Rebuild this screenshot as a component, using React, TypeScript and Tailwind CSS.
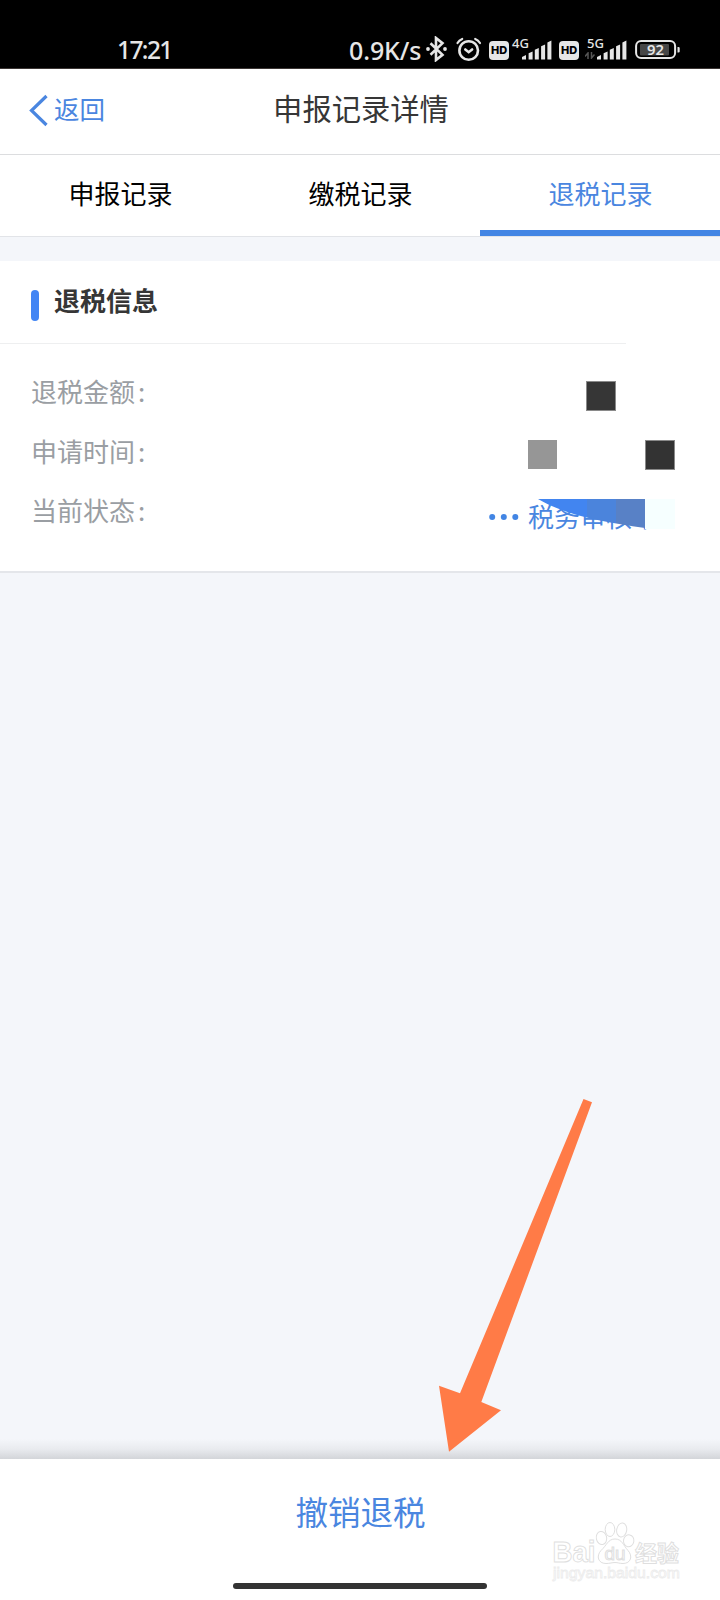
const tabs = [
    { label: '申报记录', active: false },
    { label: '缴税记录', active: false },
    { label: '退税记录', active: true },
];

function SignalBars() {
    return (
        <svg className="block" width="30" height="20" viewBox="0 0 30 20" fill="#e6e6e6">
            <path d="M0 19.5v-2.6l4-1.9v4.5zM6.6 19.5v-6.2l4-1.8v8zM12.8 19.5V9.8l4-1.8v11.5zM19.1 19.5V6.2l4-1.8v15.1zM25.4 19.5V2.4l4-1.8v18.9z" />
        </svg>
    );
}

function HdBadge() {
    return (
        <div className="flex h-[19px] w-[20px] items-center justify-center rounded-[4px] bg-[#e6e6e6] font-['Inter'] text-[11px] leading-none font-extrabold text-black">
            HD
        </div>
    );
}

function StatusBar() {
    return (
        <div className="flex h-[69px] items-start border-b border-[#3c3634] bg-black pt-[36px] font-['Noto_Sans'] font-medium text-[#e6e6e6]">
            <span className="ml-[117px] w-[232px] text-[24.5px] leading-[28px] tracking-[-1.6px]">17:21</span>
            <span className="w-[76px] text-[25px] leading-[28px] tracking-[-0.1px]">0.9K/s</span>

            {/* Bluetooth */}
            <svg className="block" width="24" height="26" viewBox="0 0 24 26" fill="none" stroke="#e6e6e6" strokeWidth="2.6">
                <path d="M5.5 7.2l12 11.6-6.5 5.2V2l6.5 5.2-12 11.6" />
                <circle cx="20" cy="13" r="1.9" fill="#e6e6e6" stroke="none" />
                <circle cx="3" cy="13" r="1.9" fill="#e6e6e6" stroke="none" />
            </svg>

            {/* Alarm */}
            <svg className="ml-[6px] block" width="28" height="26" viewBox="0 0 28 26" fill="none" stroke="#e6e6e6" strokeWidth="2.6" strokeLinecap="round">
                <circle cx="13.7" cy="14.5" r="9.3" />
                <path d="M10.3 13.5l3.4 2.7 3.4-2.7" />
                <path d="M2.5 7Q4.2 4.1 7.2 2.9M25 7Q23.2 4.1 20.2 2.9" strokeWidth="2.2" />
            </svg>

            <div className="mt-[4.5px] ml-[6px]">
                <HdBadge />
            </div>
            <div className="relative mt-[4px] ml-[13px]">
                <SignalBars />
                <span className="absolute -top-[5px] -left-[10px] text-[13px] leading-[16px]">4G</span>
            </div>
            <div className="mt-[4.5px] ml-[7px]">
                <HdBadge />
            </div>
            <div className="relative mt-[4px] ml-[18px]">
                <SignalBars />
                <span className="absolute -top-[5px] -left-[10px] text-[13px] leading-[16px]">5G</span>
                <svg className="absolute top-[12px] -left-[12px]" width="10" height="7" viewBox="0 0 10 7" fill="none" stroke="#555" strokeWidth="1.5">
                    <path d="M0 4.5L3 1v6M9.5 2.5L6.5 6V0" />
                </svg>
            </div>

            {/* Battery */}
            <svg className="mt-[4px] ml-[8px] block" width="46" height="20" viewBox="0 0 46 20">
                <rect x="1.1" y="1.1" width="39" height="17" rx="5" fill="none" stroke="#e6e6e6" strokeWidth="2" />
                <rect x="5" y="4" width="29" height="11.5" rx="1" fill="#474747" />
                <path d="M42.5 7h1q1.2 0 1.2 1v3.5q0 1-1.2 1h-1z" fill="#e6e6e6" />
                <text x="20.5" y="15.2" textAnchor="middle" fill="#e6e6e6" fontSize="15" fontWeight="600" fontFamily="Noto Sans" textLength="17" lengthAdjust="spacingAndGlyphs">92</text>
            </svg>
        </div>
    );
}

function Header() {
    return (
        <header className="grid h-[86px] grid-cols-[1fr_auto_1fr] border-b border-[#dcdddf] bg-white">
            <div className="flex items-start pt-[24px] pl-[29px] text-[#4a86e0]">
                <svg className="mt-px block" width="19" height="33" viewBox="0 0 19 33" fill="none" stroke="#4a86e0" strokeWidth="3.2">
                    <path d="M17.5 2L2.5 16.5l15 14.5" />
                </svg>
                <span className="-mt-[2px] ml-[6px] text-[25.5px] leading-[34px]">返回</span>
            </div>
            <h1 className="pt-[18px] pl-[2px] text-[29.3px] leading-[40px] text-[#363636]">申报记录详情</h1>
            <div />
        </header>
    );
}

function RefundCard() {
    return (
        <section className="h-[312px] border-b-2 border-[#e4e6ea] bg-white">
            <div className="flex h-[82px] items-start pt-[22px] pl-[31px]">
                <div className="mt-[7px] h-[31px] w-[8px] rounded-full bg-[#4285f4]" />
                <h2 className="ml-[15px] text-[26px] leading-[34px] font-bold text-[#363636]">退税信息</h2>
            </div>
            <div className="h-px w-[626px] bg-[#eeeff0]" />

            <div className="flex flex-col gap-[25.5px] pt-[30px] pr-[45px] pl-[31px] text-[26px] leading-[34px] text-[#9a9ea3]">
                <div className="flex h-[34px] items-start">
                    <span className="flex-1">退税金额<span className="ml-[3px]">:</span></span>
                    <div className="mt-[7px] mr-[59px] size-[30px] border border-[#8a8a8a] bg-[#363636]" />
                </div>
                <div className="flex h-[34px] items-start">
                    <span className="flex-1">申请时间<span className="ml-[3px]">:</span></span>
                    <div className="mt-[6px] mr-[88px] size-[29px] bg-[#969696]" />
                    <div className="mt-[6px] size-[30px] border border-[#8a8a8a] bg-[#333]" />
                </div>
                <div className="flex h-[34px] items-start">
                    <span className="flex-1">当前状态<span className="ml-[3px]">:</span></span>
                    <div className="relative mt-[6px] flex w-[186px] items-start text-[#4a86e0]">
                        <svg className="mt-[14px] block" width="32" height="8" viewBox="0 0 32 8" fill="#4285e4">
                            <circle cx="3.2" cy="4" r="3" />
                            <circle cx="14.8" cy="4" r="3" />
                            <circle cx="26.3" cy="4" r="3" />
                        </svg>
                        <span className="ml-[7px] whitespace-nowrap">税务审核中</span>
                        {/* Mask over the end of the status text */}
                        <svg className="absolute top-0 left-[49px]" width="137" height="30" viewBox="0 0 137 30">
                            <defs>
                                <clipPath id="wedge">
                                    <path d="M0 0H107V29C65 23 27 16 0 0z" />
                                </clipPath>
                            </defs>
                            <g clipPath="url(#wedge)">
                                <rect width="49" height="30" fill="#4285f0" />
                                <rect x="49" width="29" height="30" fill="#4b84dc" />
                                <rect x="78" width="29" height="30" fill="#5881c6" />
                            </g>
                            <rect x="107" width="30" height="30" fill="#f6ffff" />
                        </svg>
                        <div className="absolute top-[30px] left-[159px] h-[6px] w-[14px] bg-white" />
                    </div>
                </div>
            </div>
        </section>
    );
}

function Watermark() {
    return (
        <svg className="absolute top-[1518px] left-[550px]" width="134" height="68" viewBox="0 0 134 68" fill="#fff" stroke="#dfdfdf" strokeWidth="1">
            <text x="2.5" y="44" fontSize="30" fontWeight="700" fontFamily="Liberation Sans" textLength="43" lengthAdjust="spacingAndGlyphs">Bai</text>
            <ellipse cx="51.5" cy="20" rx="5.2" ry="6.6" transform="rotate(-12 51.5 20)" />
            <ellipse cx="60" cy="11.5" rx="4.8" ry="7" />
            <ellipse cx="71.7" cy="12" rx="5" ry="7" transform="rotate(10 71.7 12)" />
            <ellipse cx="78.7" cy="22.8" rx="5.2" ry="6" transform="rotate(10 78.7 22.8)" />
            <path d="M65 21C72 21 73 27 78 32.5 83 38 81 45.5 73 45.5 69 45.5 68 44.5 65 44.5S60 45.5 56 45.5C48 45.5 46 38 51 32.5 57 27 58 21 65 21z" />
            <text x="54.5" y="41.5" fontSize="18" fontWeight="400" fontFamily="Liberation Sans" textLength="21" lengthAdjust="spacingAndGlyphs">du</text>
            <text x="85" y="43" fontSize="22" fontWeight="700" fontFamily="Noto Sans CJK SC">经验</text>
            <text x="3" y="60" fontSize="15" fontFamily="Liberation Sans" stroke="#ececec" strokeWidth="0.8" textLength="127" lengthAdjust="spacingAndGlyphs">jingyan.baidu.com</text>
        </svg>
    );
}

export default function App() {
    return (
        <div className="relative flex h-[1600px] w-[720px] flex-col overflow-hidden bg-[#f4f6fa] font-['Noto_Sans_CJK_SC',sans-serif]">
            <StatusBar />
            <Header />

            <nav className="grid h-[82px] grid-cols-3 border-b border-[#e2e4e8] bg-white text-center text-[26px] leading-[34px]">
                {tabs.map((tab) => (
                    <div
                        key={tab.label}
                        className={`pt-[21px] pl-px ${tab.active ? 'border-b-[6px] border-[#4285e4] text-[#4a86e0]' : 'text-black'}`}
                    >
                        {tab.label}
                    </div>
                ))}
            </nav>

            <main className="flex-1 pt-[24px]">
                <RefundCard />
            </main>

            <div className="h-[20px] bg-linear-to-b from-[#f4f6fa] via-[#e9ebef] to-[#d3d5d9]" />
            <footer className="flex h-[141px] flex-col items-center bg-white pt-[30px]">
                <button className="pl-px text-[32.5px] leading-[44px] text-[#4a86e0]">撤销退税</button>
                <div className="mt-[50px] h-[6px] w-[254px] rounded-full bg-[#333]" />
            </footer>

            {/* Pointer to the cancel button */}
            <svg className="absolute top-[1098px] left-[438px]" width="156" height="356" viewBox="0 0 156 356">
                <path d="M145.5 1L154 4.2 43.3 304 63 312.3 11 353.7 1 287.7 22 295.3z" fill="#ff7b47" />
            </svg>
            <Watermark />
        </div>
    );
}
